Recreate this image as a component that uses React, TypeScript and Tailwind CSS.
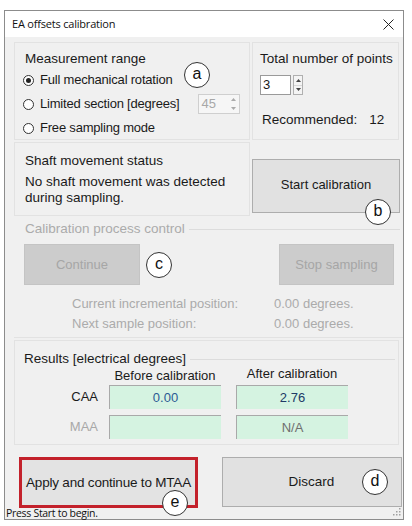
import React from "react";

const Badge = ({ l, x, y }: { l: string; x: number; y: number }) => (
  <div
    className="absolute w-[26px] h-[26px] rounded-full bg-white border border-[#333] flex items-center justify-center text-[16px] leading-none text-[#111] font-['Liberation_Sans',sans-serif]"
    style={{ left: x - 13, top: y - 13 }}
  >
    <span className="-mt-[2px]">{l}</span>
  </div>
);

const Spin = () => (
  <div className="w-[10px] h-full flex flex-col border border-[#b0b0b0] bg-[#f4f4f4]">
    <div className="flex-1 flex items-center justify-center">
      <svg width="5" height="3" viewBox="0 0 5 3"><path d="M0 3 L2.5 0 L5 3 Z" fill="#444" /></svg>
    </div>
    <div className="flex-1 flex items-center justify-center border-t border-[#d8d8d8]">
      <svg width="5" height="3" viewBox="0 0 5 3"><path d="M0 0 L2.5 3 L5 0 Z" fill="#444" /></svg>
    </div>
  </div>
);

const Radio = ({ checked, label }: { checked?: boolean; label: string }) => (
  <div className="h-[24px] flex items-center pl-[8px]">
    <div className="w-[11px] h-[11px] rounded-full border border-[#333] bg-white flex items-center justify-center">
      {checked && <div className="w-[5px] h-[5px] rounded-full bg-[#222]" />}
    </div>
    <span className="ml-[6px] text-[13px] tracking-[-0.2px] whitespace-nowrap">{label}</span>
  </div>
);

export default function App() {
  return (
    <div className="relative w-[412px] h-[526px] bg-white overflow-hidden pt-[10px] pl-[4px] font-['Liberation_Sans',Arial,sans-serif] text-[13px] leading-[16px] text-[#1a1a1a]">
      <div className="w-[400px] h-[510px] border border-[#8c8c8c] flex flex-col">
        {/* title bar */}
        <div className="h-[26px] bg-white flex items-center justify-between pl-[7px] pr-[9px] font-['Open_Sans',sans-serif] text-[11px] text-[#111]">
          <span className="tracking-[-0.2px]">EA offsets calibration</span>
          <svg width="11" height="11" viewBox="0 0 11 11" className="mt-[1px]">
            <path d="M0.5 0.5 L10.5 10.5 M10.5 0.5 L0.5 10.5" stroke="#222" strokeWidth="1" />
          </svg>
        </div>
        {/* content */}
        <div className="flex-1 bg-[#f0f0f0] flex flex-col pl-[9px]">
          {/* row 1 */}
          <div className="mt-[5px] h-[98px] flex">
            <div className="w-[236px] h-full border border-[#e2e2e2] pt-[8px]">
              <div className="pl-[10px] text-[13.5px]">Measurement range</div>
              <div className="mt-[1px]">
                <Radio checked label="Full mechanical rotation" />
                <div className="flex items-center">
                  <Radio label="Limited section [degrees]" />
                  <div className="ml-[18px] w-[42px] h-[20px] flex border border-[#cfcfcf] bg-[#f6f6f6]">
                    <span className="flex-1 pl-[3px] text-[#a8a8a8] leading-[18px]">45</span>
                    <div className="w-[10px] flex flex-col">
                      <div className="flex-1 flex items-center justify-center">
                        <svg width="5" height="3" viewBox="0 0 5 3"><path d="M0 3 L2.5 0 L5 3 Z" fill="#aaa" /></svg>
                      </div>
                      <div className="flex-1 flex items-center justify-center">
                        <svg width="5" height="3" viewBox="0 0 5 3"><path d="M0 0 L2.5 3 L5 0 Z" fill="#aaa" /></svg>
                      </div>
                    </div>
                  </div>
                </div>
                <Radio label="Free sampling mode" />
              </div>
            </div>
            <div className="ml-[2px] w-[147px] h-full border border-[#e2e2e2] pt-[8px] pl-[7px]">
              <div className="text-[13.5px] whitespace-nowrap">Total number of points</div>
              <div className="mt-[8px] h-[20px] flex">
                <div className="w-[31px] h-full bg-white border border-[#9a9a9a] pl-[2px] leading-[18px]">3</div>
                <div className="ml-[2px] h-full">
                  <Spin />
                </div>
              </div>
              <div className="mt-[17px] flex pl-[2px] text-[13.5px]">
                <span>Recommended:</span>
                <span className="ml-[12px]">12</span>
              </div>
            </div>
          </div>
          {/* row 2 */}
          <div className="mt-[2px] h-[74px] flex">
            <div className="w-[236px] h-full border border-[#e2e2e2] pt-[10px] pl-[10px] text-[13.5px]">
              <div>Shaft movement status</div>
              <div className="mt-[5px] leading-[16px]">
                No shaft movement was detected
                <br />
                during sampling.
              </div>
            </div>
            <div className="ml-[2px] mt-[17px] w-[148px] h-[54px] bg-[#e1e1e1] border border-[#adadad] flex items-center justify-center">
              <span className="-mt-[3px]">Start calibration</span>
            </div>
          </div>
          {/* calibration group */}
          <div className="mt-[4px] h-[118px] flex flex-col text-[#ababab] border-b border-[#e2e2e2]">
            <div className="h-[18px] flex items-center pl-[11px] pr-[3px] text-[13.5px]">
              <span>Calibration process control</span>
              <div className="flex-1 ml-[4px] h-px bg-[#dcdcdc]" />
            </div>
            <div className="mt-[6px] h-[41px] flex pl-[10px]">
              <div className="w-[116px] h-full bg-[#cccccc] border border-[#c4c4c4] flex items-center justify-center text-[#a6a6a6]">
                Continue
              </div>
              <div className="ml-[139px] w-[115px] h-full bg-[#cccccc] border border-[#c4c4c4] flex items-center justify-center text-[#a6a6a6]">
                Stop sampling
              </div>
            </div>
            <div className="mt-[11px] flex pl-[58px]">
              <span className="w-[202px]">Current incremental position:</span>
              <span>0.00 degrees.</span>
            </div>
            <div className="mt-[4px] flex pl-[58px]">
              <span className="w-[202px]">Next sample position:</span>
              <span>0.00 degrees.</span>
            </div>
          </div>
          {/* results */}
          <div className="mt-[2px] h-[105px] w-[385px] border border-[#e2e2e2] flex flex-col">
            <div className="mt-[10px] h-[16px] flex items-center pl-[9px] pr-[3px] text-[13.5px]">
              <span>Results [electrical degrees]</span>
              <div className="flex-1 ml-[4px] h-px bg-[#dcdcdc]" />
            </div>
            <div className="h-[16px] flex mt-[1px]">
              <div className="w-[83px]" />
              <div className="ml-[11px] w-[112px] text-center whitespace-nowrap">Before calibration</div>
              <div className="ml-[15px] w-[112px] text-center whitespace-nowrap -mt-[2px]">After calibration</div>
            </div>
            <div className="h-[24px] flex mt-[1px]">
              <div className="w-[83px] text-right self-center">CAA</div>
              <div className="ml-[11px] w-[112px] h-full bg-[#d5f3e1] border-l border-t border-[#a9a9a9] flex items-center justify-center text-[#2c5a94]">
                0.00
              </div>
              <div className="ml-[15px] w-[112px] h-full bg-[#d5f3e1] border-l border-t border-[#a9a9a9] flex items-center justify-center text-[#203a66]">
                2.76
              </div>
            </div>
            <div className="h-[24px] flex mt-[6px]">
              <div className="w-[83px] text-right self-center text-[#a8a8a8]">MAA</div>
              <div className="ml-[11px] w-[112px] h-full bg-[#d5f3e1] border-l border-t border-[#a9a9a9]" />
              <div className="ml-[15px] w-[112px] h-full bg-[#d5f3e1] border-l border-t border-[#a9a9a9] flex items-center justify-center text-[#6f6f6f]">
                N/A
              </div>
            </div>
          </div>
          {/* bottom buttons */}
          <div className="mt-[12px] h-[51px] flex">
            <div className="ml-[5px] w-[179px] h-full border-[3px] border-[#c3212b] bg-[#e3e3e3] flex items-center justify-center">
              <span className="whitespace-nowrap text-[13.5px] tracking-[-0.2px]">Apply and continue to MTAA</span>
            </div>
            <div className="ml-[24px] w-[180px] h-[50px] bg-[#e1e1e1] border border-[#adadad] flex items-center justify-center">
              <span className="ml-[-1px] text-[13.5px]">Discard</span>
            </div>
          </div>
          {/* status bar */}
          <div className="h-[10px] flex items-center -ml-[8px] pr-[2px] justify-between">
            <span className="font-['Open_Sans',sans-serif] text-[10.5px] leading-[10px] tracking-[-0.3px] text-[#111] whitespace-nowrap">
              Press Start to begin.
            </span>
            <svg width="8" height="8" viewBox="0 0 8 8" className="-mt-[2px]">
              <g fill="#a0a0a0">
                <rect x="6" y="0" width="1.5" height="1.5" />
                <rect x="3" y="3" width="1.5" height="1.5" />
                <rect x="6" y="3" width="1.5" height="1.5" />
                <rect x="0" y="6" width="1.5" height="1.5" />
                <rect x="3" y="6" width="1.5" height="1.5" />
                <rect x="6" y="6" width="1.5" height="1.5" />
              </g>
            </svg>
          </div>
        </div>
      </div>
      <Badge l="a" x={197} y={75} />
      <Badge l="b" x={378} y={212} />
      <Badge l="c" x={159} y={265} />
      <Badge l="d" x={375} y={482} />
      <Badge l="e" x={175} y={503} />
    </div>
  );
}
